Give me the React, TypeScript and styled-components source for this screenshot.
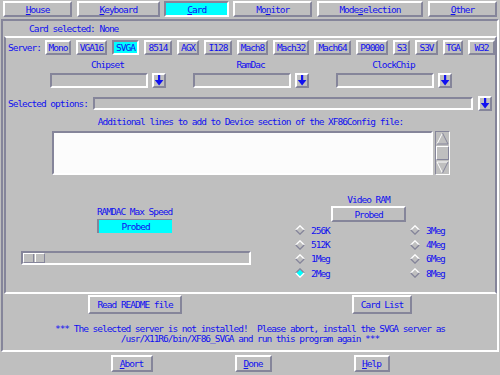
import React from "react";
import styled, { createGlobalStyle, css } from "styled-components";

const BG = "#bfbfbf";
const DARK = "#85859a";
const LIGHT = "#ffffff";
const FG = "#1010f0";
const CYAN = "#00ffff";

const Global = createGlobalStyle`
  html, body { margin: 0; padding: 0; background: ${BG}; }
  body {
    width: 500px; height: 375px; overflow: hidden;
    font-family: "DejaVu Sans Mono", "Liberation Mono", monospace;
    font-size: 9.5px; letter-spacing: -1.02px; color: ${FG};
  }
  * { box-sizing: border-box; }
`;

const raised = css`
  border: 2px solid;
  border-color: ${LIGHT} ${DARK} ${DARK} ${LIGHT};
`;
const sunken = css`
  border: 2px solid;
  border-color: ${DARK} ${LIGHT} ${LIGHT} ${DARK};
`;

const Screen = styled.div`
  width: 500px;
  height: 375px;
  display: flex;
  flex-direction: column;
`;

const TabBar = styled.div`
  height: 19px;
  padding: 1px 3px 0;
  display: flex;
  align-items: flex-start;
  gap: 4.5px;
`;

const Tab = styled.div<{ $active?: boolean }>`
  flex: 1 1 auto;
  height: 16px;
  display: flex;
  align-items: center;
  justify-content: center;
  white-space: nowrap;
  ${(p) => (p.$active ? sunken : raised)};
  background: ${(p) => (p.$active ? CYAN : BG)};
`;

const Mn = styled.span`
  text-decoration: underline;
  text-underline-offset: 1px;
`;

const MainFrame = styled.div`
  margin: 0 1px;
  height: 333px;
  ${sunken};
  display: flex;
  flex-direction: column;
`;

const CardSelected = styled.div`
  height: 15px;
  padding: 1px 0 0 26px;
  line-height: 14px;
`;

const InnerFrame = styled.div`
  margin-left: 1px;
  height: 258px;
  border: 2px solid;
  border-color: ${LIGHT} ${DARK} ${LIGHT} ${DARK};
  display: flex;
  flex-direction: column;
`;

const ServerRow = styled.div`
  margin-top: 2px;
  height: 15px;
  padding-left: 2px;
  display: flex;
  align-items: center;
  gap: 5px;
`;

const ServerLabel = styled.span`
  width: 32px;
  white-space: nowrap;
`;

const ServerButton = styled.div<{ $w: number; $active?: boolean }>`
  width: ${(p) => p.$w}px;
  height: 15px;
  display: flex;
  align-items: center;
  justify-content: center;
  white-space: nowrap;
  ${(p) => (p.$active ? sunken : raised)};
  background: ${(p) => (p.$active ? CYAN : BG)};
`;

const ChipGrid = styled.div`
  margin-top: 4px;
  display: grid;
  grid-template-columns: repeat(3, 116px);
  column-gap: 27px;
  justify-content: center;
`;

const ChipGroup = styled.div`
  display: flex;
  flex-direction: column;
  align-items: center;
`;

const Label = styled.div`
  line-height: 11px;
  white-space: nowrap;
`;

const EntryRow = styled.div`
  margin-top: 3px;
  display: flex;
  align-items: center;
  gap: 4px;
`;

const Entry = styled.div<{ $w: number; $h: number }>`
  width: ${(p) => p.$w}px;
  height: ${(p) => p.$h}px;
  ${sunken};
  background: ${BG};
`;

const ArrowButton = styled.div<{ $w: number }>`
  width: ${(p) => p.$w}px;
  height: 15px;
  ${raised};
  display: flex;
  align-items: center;
  justify-content: center;
  svg { display: block; }
`;

const OptionsRow = styled.div`
  margin-top: 8px;
  height: 15px;
  padding-left: 2px;
  display: flex;
  align-items: center;
  gap: 5px;
`;

const CenterLabel = styled(Label)`
  margin-top: 5px;
  text-align: center;
`;

const TextRow = styled.div`
  margin-top: 4px;
  height: 44px;
  display: flex;
  justify-content: center;
  gap: 2px;
`;

const TextBox = styled.div`
  width: 381px;
  height: 44px;
  background: #fcfcfc;
  ${sunken};
`;

const Scrollbar = styled.div`
  width: 15px;
  height: 44px;
  border: 1px solid;
  border-color: ${DARK} ${LIGHT} ${LIGHT} ${DARK};
  display: flex;
  flex-direction: column;
  svg { display: block; }
`;

const Thumb = styled.div`
  flex: 1;
  margin: 1px 0;
  border: 1px solid;
  border-color: ${LIGHT} ${DARK} ${DARK} ${LIGHT};
`;

const Lower = styled.div`
  flex: 1;
  display: flex;
`;

const LeftCol = styled.div`
  width: 254px;
  display: flex;
  flex-direction: column;
`;

const RightCol = styled.div`
  flex: 1;
  display: flex;
  flex-direction: column;
`;

const Group = styled.div<{ $ml: number; $mt: number }>`
  margin-left: ${(p) => p.$ml}px;
  margin-top: ${(p) => p.$mt}px;
  width: 75px;
  display: flex;
  flex-direction: column;
  align-items: center;
`;

const SpeedBox = styled.div`
  margin-top: 2px;
  width: 75px;
  height: 14px;
  background: ${CYAN};
  border-left: 2px solid ${DARK};
  border-top: 1px solid ${DARK};
  display: flex;
  align-items: center;
  justify-content: center;
`;

const ProbedButton = styled.div`
  margin-top: 1px;
  width: 75px;
  height: 16px;
  ${raised};
  display: flex;
  align-items: center;
  justify-content: center;
`;

const Trough = styled.div`
  margin: 18px 0 0 15px;
  width: 230px;
  height: 14px;
  ${sunken};
  display: flex;
`;

const Knob = styled.div`
  width: 22px;
  height: 10px;
  border: 1px solid;
  border-color: ${LIGHT} ${DARK} ${DARK} ${LIGHT};
  display: flex;
  justify-content: center;
  &::after {
    content: "";
    width: 1px;
    border-left: 1px solid ${DARK};
    border-right: 1px solid ${LIGHT};
  }
`;

const RadioGrid = styled.div`
  margin: 1px 0 0 35px;
  display: grid;
  grid-template-columns: 115px auto;
  grid-auto-flow: column;
  grid-template-rows: repeat(4, 14.4px);
`;

const RadioItem = styled.div`
  display: flex;
  align-items: center;
  gap: 6px;
  white-space: nowrap;
  svg { display: block; }
`;

const BottomArea = styled.div`
  display: flex;
  flex-direction: column;
`;

const ActionRow = styled.div`
  margin-top: 1px;
  padding: 0 85px;
  display: flex;
  justify-content: space-between;
`;

const ActionButton = styled.div<{ $w: number }>`
  width: ${(p) => p.$w}px;
  height: 19px;
  ${raised};
  display: flex;
  align-items: center;
  justify-content: center;
  white-space: nowrap;
`;

const Message = styled.div`
  margin-top: 10px;
  line-height: 10px;
  text-align: center;
  white-space: pre;
`;

const BottomBar = styled.div`
  padding-top: 3px;
  display: flex;
  justify-content: center;
  gap: 82px;
`;

const BarButton = styled.div<{ $w: number }>`
  width: ${(p) => p.$w}px;
  height: 17px;
  ${raised};
  display: flex;
  align-items: center;
  justify-content: center;
`;

const DownArrow = () => (
  <svg width="10" height="11" viewBox="0 0 10 11">
    <rect x="4" y="0" width="2.2" height="6" fill={FG} />
    <polygon points="0.8,5 9.4,5 5.1,10.5" fill={FG} />
  </svg>
);

const ScrollUp = () => (
  <svg width="13" height="13" viewBox="0 0 13 13">
    <polyline points="1,12 6.5,1" fill="none" stroke={LIGHT} strokeWidth="1" />
    <polyline points="6.5,1 12,12 1,12" fill="none" stroke={DARK} strokeWidth="1" />
  </svg>
);

const ScrollDown = () => (
  <svg width="13" height="13" viewBox="0 0 13 13">
    <polyline points="12,1 1,1 6.5,12" fill="none" stroke={LIGHT} strokeWidth="1" />
    <polyline points="6.5,12 12,1" fill="none" stroke={DARK} strokeWidth="1" />
  </svg>
);

const Diamond = ({ on }: { on?: boolean }) => (
  <svg width="10" height="10" viewBox="0 0 10 10">
    <polygon points="5,0.8 9.2,5 5,9.2 0.8,5" fill={on ? CYAN : BG} />
    <polyline points="0.8,5 5,0.8 9.2,5" fill="none" stroke={on ? DARK : LIGHT} strokeWidth="1.3" />
    <polyline points="9.2,5 5,9.2 0.8,5" fill="none" stroke={on ? LIGHT : DARK} strokeWidth="1.3" />
  </svg>
);

const tabs: { pre: string; key: string; post: string; active?: boolean }[] = [
  { pre: "", key: "H", post: "ouse" },
  { pre: "", key: "K", post: "eyboard" },
  { pre: "", key: "C", post: "ard", active: true },
  { pre: "Mo", key: "n", post: "itor" },
  { pre: "Mode", key: "s", post: "election" },
  { pre: "", key: "O", post: "ther" },
];

const servers: [string, number][] = [
  ["Mono", 26],
  ["VGA16", 31],
  ["SVGA", 27],
  ["8514", 28],
  ["AGX", 22],
  ["I128", 28],
  ["Mach8", 31],
  ["Mach32", 36],
  ["Mach64", 37],
  ["P9000", 32],
  ["S3", 17],
  ["S3V", 23],
  ["TGA", 20],
  ["W32", 27],
];

const chips = ["Chipset", "RamDac", "ClockChip"];

const rams = [
  ["256K", false],
  ["512K", false],
  ["1Meg", false],
  ["2Meg", true],
  ["3Meg", false],
  ["4Meg", false],
  ["6Meg", false],
  ["8Meg", false],
] as const;

export default function App() {
  return (
    <Screen>
      <Global />
      <TabBar>
        {tabs.map((t) => (
          <Tab key={t.key + t.post} $active={t.active}>
            {t.pre}
            <Mn>{t.key}</Mn>
            {t.post}
          </Tab>
        ))}
      </TabBar>
      <MainFrame>
        <CardSelected>Card selected: None</CardSelected>
        <InnerFrame>
          <ServerRow>
            <ServerLabel>Server:</ServerLabel>
            {servers.map(([name, w]) => (
              <ServerButton key={name} $w={w} $active={name === "SVGA"}>
                {name}
              </ServerButton>
            ))}
          </ServerRow>
          <ChipGrid>
            {chips.map((c) => (
              <ChipGroup key={c}>
                <Label>{c}</Label>
                <EntryRow>
                  <Entry $w={98} $h={15} />
                  <ArrowButton $w={14}>
                    <DownArrow />
                  </ArrowButton>
                </EntryRow>
              </ChipGroup>
            ))}
          </ChipGrid>
          <OptionsRow>
            <Label>Selected options:</Label>
            <Entry $w={380} $h={13} />
            <ArrowButton $w={14}>
              <DownArrow />
            </ArrowButton>
          </OptionsRow>
          <CenterLabel>Additional lines to add to Device section of the XF86Config file:</CenterLabel>
          <TextRow>
            <TextBox />
            <Scrollbar>
              <ScrollUp />
              <Thumb />
              <ScrollDown />
            </Scrollbar>
          </TextRow>
          <Lower>
            <LeftCol>
              <Group $ml={91} $mt={31}>
                <Label>RAMDAC Max Speed</Label>
                <SpeedBox>Probed</SpeedBox>
              </Group>
              <Trough>
                <Knob />
              </Trough>
            </LeftCol>
            <RightCol>
              <Group $ml={71} $mt={19}>
                <Label>Video RAM</Label>
                <ProbedButton>Probed</ProbedButton>
              </Group>
              <RadioGrid>
                {rams.map(([r, on]) => (
                  <RadioItem key={r}>
                    <Diamond on={on} />
                    {r}
                  </RadioItem>
                ))}
              </RadioGrid>
            </RightCol>
          </Lower>
        </InnerFrame>
        <BottomArea>
          <ActionRow>
            <ActionButton $w={94}>Read README file</ActionButton>
            <ActionButton $w={60}>Card List</ActionButton>
          </ActionRow>
          <Message>
            {"*** The selected server is not installed!  Please abort, install the SVGA server as\n/usr/X11R6/bin/XF86_SVGA and run this program again ***"}
          </Message>
        </BottomArea>
      </MainFrame>
      <BottomBar>
        <BarButton $w={42}>
          <Mn>A</Mn>bort
        </BarButton>
        <BarButton $w={37}>
          <Mn>D</Mn>one
        </BarButton>
        <BarButton $w={36}>
          <Mn>H</Mn>elp
        </BarButton>
      </BottomBar>
    </Screen>
  );
}
